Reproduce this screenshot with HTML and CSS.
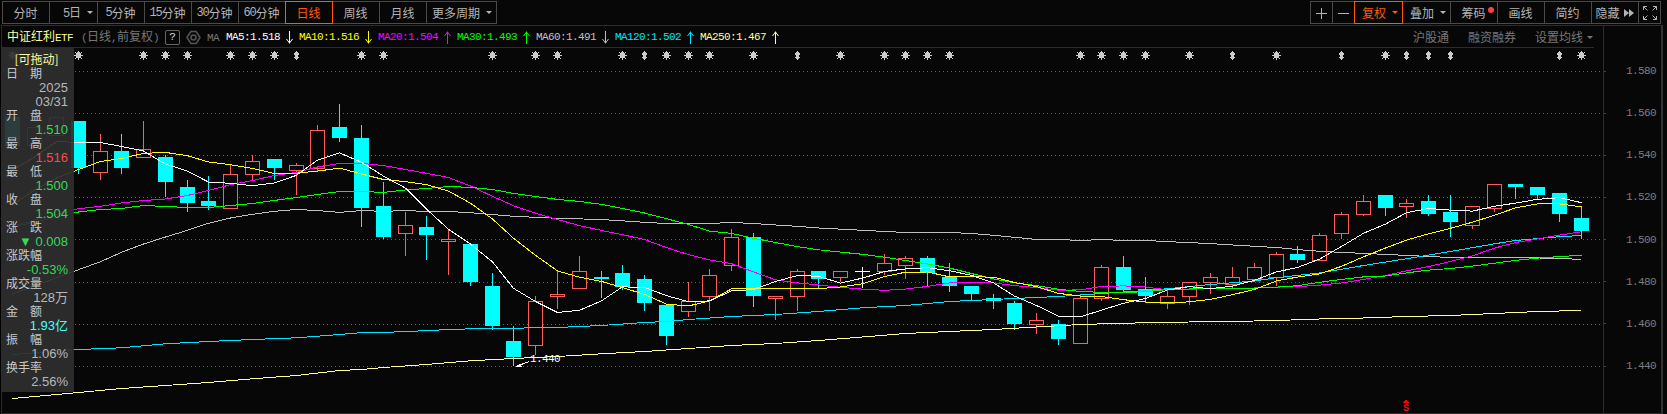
FILE: index.html
```html
<!DOCTYPE html>
<html lang="zh-CN">
<head>
  <meta charset="UTF-8" />
  <title>中证红利ETF 日线</title>
  <link rel="stylesheet" href="styles.css">
</head>
<body>
  <div class="toolbar">
    <div class="group">
      <div class="btn">分时</div>
      <div class="btn wide drop"><span><i>5</i>日</span><b class="caret"></b></div>
      <div class="btn"><i>5</i>分钟</div>
      <div class="btn"><i>15</i>分钟</div>
      <div class="btn"><i>30</i>分钟</div>
      <div class="btn"><i>60</i>分钟</div>
      <div class="btn active">日线</div>
      <div class="btn">周线</div>
      <div class="btn">月线</div>
      <div class="btn more drop"><span>更多周期</span><b class="caret"></b></div>
    </div>
    <div class="group">
      <div class="btn icon"><svg width="12" height="12"><path d="M0 6.5H11M5.5 1V12" /></svg></div>
      <div class="btn icon"><svg width="12" height="12"><path d="M0 6.5H11" /></svg></div>
      <div class="btn wide drop active"><span>复权</span><b class="caret"></b></div>
      <div class="btn wide drop"><span>叠加</span><b class="caret"></b></div>
      <div class="btn chips">筹码<span class="dot"></span></div>
      <div class="btn">画线</div>
      <div class="btn">简约</div>
      <div class="btn hide">隐藏<svg width="10" height="8"><path class="solid" d="M0 0L5 4L0 8ZM5 0L10 4L5 8Z" /></svg></div>
      <div class="btn icon"><svg width="14" height="14"><path d="M.5 4V.5H4M.5 .5L4.5 4.5M10 .5H13.5V4M13.5 .5L9.5 4.5M.5 10V13.5H4M.5 13.5L4.5 9.5M10 13.5H13.5V10M13.5 13.5L9.5 9.5" /></svg></div>
    </div>
  </div>

  <div class="main">
    <div class="left">
      <div class="info">
        <span class="name">中证红利<i>ETF</i></span>
        <span class="sub"><i>(</i>日线<i>,</i>前复权<i>)</i></span>
        <span class="help">?</span>
        <svg class="gear" width="15" height="15"><path d="M5 1.5H10L11.5 3.5L14 7.5L11.5 11.5L10 13.5H5L3.5 11.5L1 7.5L3.5 3.5Z" /><circle cx="7.5" cy="7.5" r="2.5" /></svg>
        <span class="ma-label"><i>MA</i></span>
        <div class="mas" id="mas"></div>
        <div class="links">
          <span>沪股通</span>
          <span>融资融券</span>
          <span>设置均线<b class="caret"></b></span>
        </div>
      </div>
      <div class="chart">
        <svg id="chart" width="1602" height="365" viewBox="2 48 1602 365"></svg>
        <div class="panel" id="panel"><div class="drag">[可拖动]</div></div>
      </div>
    </div>
    <div class="axis" id="axis"></div>
  </div>

<script src="chart.js"></script>
</body>
</html>
```
FILE: styles.css
```css
* {
  box-sizing: border-box;
}
body {
  margin: 0;
  width: 1667px;
  height: 414px;
  overflow: hidden;
  background: #070707;
  color: #b4b4b4;
  font: 12px/14px "Noto Sans CJK SC", sans-serif;
  border-left: 1px solid #000;
}
i {
  font-family: "Liberation Mono", monospace;
  font-style: normal;
  font-size: 11px;
  letter-spacing: -0.6px;
}
svg {
  display: block;
}

/* toolbar */
.toolbar {
  display: flex;
  justify-content: space-between;
  height: 25px;
  padding: 1px 6px 0 1px;
}
.group {
  display: flex;
}
.btn {
  display: flex;
  align-items: center;
  justify-content: center;
  width: 48px;
  height: 23px;
  margin-right: -1px;
  padding-right: 1px;
  border: 1px solid #4a4a4a;
  white-space: nowrap;
}
.group .btn:last-child {
  margin-right: 0;
}
.btn i {
  font-size: 12px;
  letter-spacing: -1.1px;
}
.wide {
  width: 49px;
}
.more {
  width: 71px;
}
.drop {
  justify-content: flex-end;
  gap: 6px;
  padding-right: 4px;
}
.caret {
  border: 3px solid transparent;
  border-top-color: currentColor;
  border-bottom: 0;
}
.active {
  position: relative;
  color: #ff5a0a;
  border-color: #ff5a0a;
}
.icon {
  width: 23px;
  padding-right: 0;
}
.btn path {
  fill: none;
  stroke: currentColor;
}
.btn .solid {
  fill: currentColor;
  stroke: none;
}
.chips {
  position: relative;
}
.dot {
  position: absolute;
  right: 3px;
  top: 5px;
  width: 6px;
  height: 6px;
  border-radius: 50%;
  background: #ff4040;
}
.hide {
  gap: 4px;
}

/* main area */
.main {
  display: flex;
  width: 1662px;
  height: 389px;
  border: 1px solid #2b2b2b;
  border-right: 2px solid #333;
}
.left {
  width: 1602px;
  border-right: 1px solid #2b2b2b;
}
.info {
  display: flex;
  align-items: center;
  height: 22px;
  width: 1592px;
  padding-left: 5px;
  padding-top: 1px;
  border-bottom: 1px solid #2b2b2b;
  color: #777;
  white-space: nowrap;
}
.name {
  width: 74px;
  color: #ffff9a;
}
.sub {
  width: 84px;
}
.help {
  width: 15px;
  height: 15px;
  border: 1px solid #666;
  border-radius: 2px;
  color: #ddd;
  text-align: center;
  font: 11px/13px "Liberation Mono", monospace;
}
.gear {
  margin: 0 6px 0 6px;
}
.gear path, .gear circle {
  fill: none;
  stroke: #555;
  stroke-width: 1.5;
}
.ma-label {
  width: 19px;
}
.mas, .ma {
  display: flex;
  align-items: center;
}
.ma svg {
  margin: 0 6px;
}
.ma path {
  fill: none;
  stroke: currentColor;
}
.links {
  display: flex;
  gap: 19px;
  margin-left: auto;
  padding-right: 1px;
}
.links span {
  display: flex;
  align-items: center;
}
.links .caret {
  margin-left: 4px;
}

.chart {
  position: relative;
  height: 365px;
}
.grid {
  stroke: #606060;
  stroke-dasharray: 1 3;
}
.up {
  fill: #070707;
  stroke: #ff5c5c;
}
.down {
  fill: #00ffff;
}
.up-wick {
  fill: #ff5c5c;
}
.flat {
  fill: #fff;
}
.line {
  fill: none;
}
.mark {
  fill: #ccc;
}
.low-text {
  fill: #fff;
  font: 11px "Liberation Mono", monospace;
  letter-spacing: -0.6px;
}
.low-arrow {
  fill: #fff;
  stroke: #fff;
}
.sell {
  fill: #f00;
  font: bold 10px "Liberation Mono", monospace;
}

/* floating data panel */
.panel {
  position: absolute;
  left: 0;
  top: 0;
  width: 72px;
  height: 344px;
  padding: 4px 6px 0 4px;
  background: rgba(46, 46, 46, 0.93);
  color: #c8c8c8;
}
.panel div {
  height: 14px;
  white-space: nowrap;
}
.panel .drag {
  color: #ffff9a;
  text-align: center;
  padding-right: 1px;
}
.panel .key {
  display: flex;
  justify-content: space-between;
  width: 36px;
}
.panel .val {
  text-align: right;
  font: 13px/16px "Liberation Sans", "Noto Sans CJK SC", sans-serif;
  color: #b8b8b8;
}
.panel .green {
  color: #35d95a;
}
.panel .red {
  color: #ee5050;
}
.panel .cyan {
  color: #4ff;
}

/* price axis */
.axis {
  flex: 1;
  padding-top: 24px;
  color: #7d7d7d;
}
.axis div {
  display: flex;
  align-items: center;
  justify-content: space-between;
  height: 42.15px;
  padding-right: 5px;
}
.axis div::before {
  content: "";
  width: 2px;
  height: 1px;
  background: #444;
}
```
FILE: chart.js
```js
const STEP = 21.78;
const cx = i => Math.floor(78.3 + i * STEP);

// [type, body top, body bottom, high, low]
const candles = [
  ['d',121,168,121,174],['u',151,173,134,180],['d',151,168,134,174],['u',149,158,121,158],['d',157,182,155,197],
  ['d',187,203,180,212],['d',201,206,176,210],['u',174,209,164,209],['u',161,175,155,180],['d',159,168,159,180],
  ['u',165,171,163,195],['u',130,169,125,171],['d',127,138,104,142],['d',138,208,125,227],['d',206,237,182,239],
  ['u',225,234,212,256],['d',227,235,216,260],['u',239,242,229,275],['d',244,282,244,286],['d',286,326,273,330],
  ['d',341,357,326,366],['u',301,346,296,355],['u',294,297,270,309],['u',271,289,256,289],['d',277,279,271,298],
  ['d',273,287,265,290],['d',279,303,275,311],['d',305,336,305,345],['u',301,312,282,317],['u',275,297,269,311],
  ['u',237,266,229,271],['d',237,296,233,307],['u',296,299,296,320],['u',271,297,269,311],['d',271,279,271,288],
  ['u',271,278,271,282],['f',271,272,267,288],['u',263,272,254,275],['u',258,266,256,279],['d',258,273,256,286],
  ['d',277,286,263,292],['d',286,294,286,300],['d',298,301,294,309],['d',303,324,301,330],['u',320,325,313,334],
  ['d',324,339,320,345],['u',298,344,295,344],['u',267,299,265,301],['d',267,290,256,291],['d',289,296,277,303],
  ['u',296,304,290,309],['u',282,297,282,305],['u',277,283,273,294],['u',277,285,267,288],['u',267,280,263,282],
  ['u',254,278,252,286],['d',254,260,246,263],['u',235,261,233,261],['u',214,234,212,239],['u',201,215,195,216],
  ['d',195,208,195,216],['u',203,207,199,218],['d',201,214,195,216],['d',212,222,195,237],['u',206,226,206,229],
  ['u',184,209,184,212],['d',184,187,184,199],['d',187,195,187,199],['d',193,214,193,222],['d',218,231,206,239]
];

const closes = candles.map(c => c[0] === 'd' ? c[2] : c[1]);

// simple moving average of the closes, continued from the points in head
function average(n, head) {
  const pts = head.slice();
  for (let i = n - 1; i < closes.length; i++) {
    let sum = 0;
    for (let k = 0; k < n; k++) sum += closes[i - k];
    pts.push([i, sum / n + 0.5]);
  }
  return pts;
}

const lines = [
  ['#c0c0c0', [[-3,294],[0,269.7],[1,261.7],[2,252.3],[3,244],[4,237],[5,230.3],[6,223.3],[7,218],[8,214.3],[9,211.3],[10,209.5],[11,210.5],[12,212.4],[13,210.5],[14,211.4],[15,210.5],[16,211.5],[17,211.5],[18,212.7],[20,216.3],[22,218.3],[24,219.5],[26,222.3],[27,223.5],[29,223.5],[30,222.5],[31,223.5],[32,225],[33,226.3],[34,228],[36,230.3],[38,232.5],[40,232.5],[41,233.5],[42,235.3],[43,237.3],[44,239.5],[45,239.5],[46,240.5],[47,239.5],[48,240.5],[49,240.5],[50,241.6],[52,243.6],[54,246.3],[55,247.5],[56,249.6],[57,251.3],[59,253.4],[61,255.4],[63,257.5],[66,257.5],[68,258.4],[69,259.5]]],
  ['#ffff96', [[-3,398.5],[0,392.5],[2,388.5],[4,385.5],[6,382.5],[8,378.8],[10,375.5],[12,370.5],[13,369.5],[14,367.5],[16,364.5],[18,360.8],[20,358.5],[22,356.5],[24,353.8],[26,351.5],[28,348.5],[30,345.5],[32,343.5],[34,340.5],[36,337],[38,333.5],[40,331.5],[41,330.5],[42,329.5],[44,327],[46,324.5],[48,323.2],[50,322.5],[52,321.5],[54,321],[55,320.5],[57,319],[59,318],[61,316.5],[63,315.5],[65,313.5],[67,311.5],[69,310.5]]],
  ['#00e5ff', [[-3,354.5],[0,349.5],[2,347.8],[4,343.8],[6,341.5],[8,339.5],[10,337.8],[12,334.5],[13,332.6],[15,331.8],[16,330.5],[18,328.8],[20,328.5],[21,327.5],[22,327.5],[24,325.5],[26,322.5],[27,321.5],[28,319.5],[30,316.5],[32,314.5],[34,311.5],[36,307.8],[38,305.5],[40,301.5],[41,300.5],[43,298.5],[45,296.5],[47,293.5],[49,290.5],[50,288.7],[52,284.5],[54,281],[55,277.7],[57,273],[59,265.5],[61,258.7],[63,251.5],[65,243.8],[66,240.5],[68,236.7],[69,235.5]]],
  ['#ff00ff', average(20, [[-3,226],[0,208.7],[1,206.3],[2,203],[3,200.5],[4,199],[5,195.5],[6,190.5],[7,184.7],[8,180.5],[9,175.5],[10,172.3],[11,167],[12,163.4],[13,163.4],[14,165.5],[15,169.5],[16,173.3],[17,177.5],[18,186]])],
  ['#00ff00', average(30, [[-3,227],[0,212],[1,209.5],[2,208.5],[3,205.5],[4,206.5],[5,207.5],[6,207.5],[7,205.5],[8,203.5],[9,200.4],[10,197.5],[11,194.5],[12,191.5],[13,191.5],[14,192.4],[15,190],[16,188.5],[17,186.5],[18,187.4],[19,189.5],[20,193.4],[21,196.5],[22,199.4],[23,201.4],[24,204.4],[25,208.4],[26,213],[27,218.7],[28,224.5]])],
  ['#ffff00', average(10, [[-3,205],[-2,190],[-1,178],[0,169.5],[1,161.5],[2,158.5],[3,153.4],[4,152.4],[5,155.7],[6,162],[7,164.7],[8,168.4]])],
  ['#ffffff', average(5, [[-3,170],[-2,157],[-1,141.5],[0,142.5],[1,142.5],[2,146.5],[3,151]])]
];

const stars = [-3,0,3,4,5,7,8,9,13,14,19,21,22,25,27,28,29,31,35,37,38,39,40,46,47,48,49,51,55,60,69];
const arrows = [10,26,33,53,58,61,62,63,68];

let svg = '<g shape-rendering="crispEdges">';
for (const y of [71, 113, 155, 197, 239, 282, 324, 366]) {
  svg += `<line class="grid" x1="3" x2="1602" y1="${y + .5}" y2="${y + .5}" />`;
}
// candles dimmed by the data panel
svg += '<path class="down" d="M5 117H20V146H5Z" /><path class="up" d="M27.500 127.500H41.500V145.500H27.500ZM49.500 117.500H63.500V135.500H49.500Z" />';
candles.forEach(([type, top, bottom, high, low], i) => {
  const x = cx(i);
  if (type === 'u') {
    svg += `<rect class="up-wick" x="${x}" y="${high}" width="1" height="${low - high}" />`;
    svg += `<rect class="up" x="${x - 6.5}" y="${top + .5}" width="14" height="${bottom - top - 1}" />`;
  } else {
    const cls = type === 'd' ? 'down' : 'flat';
    svg += `<rect class="${cls}" x="${x}" y="${high}" width="1" height="${low - high}" />`;
    svg += `<rect class="${cls}" x="${x - 7}" y="${top}" width="15" height="${bottom - top}" />`;
  }
});
for (const [color, pts] of lines) {
  svg += `<polyline class="line" stroke="${color}" points="${pts.map(p => (cx(p[0]) + .5) + ',' + p[1].toFixed(1)).join(' ')}" />`;
}
for (const i of stars) {
  const x = cx(i);
  svg += `<path class="mark" d="M${x - 2} 53h1v-1h1v-1h1v1h1v1h1v5h-5ZM${x} 51h1v9h-1ZM${x - 4} 55h9v1h-9ZM${x - 3} 52h1v1h-1ZM${x + 3} 52h1v1h-1ZM${x - 3} 58h1v1h-1ZM${x + 3} 58h1v1h-1Z" />`;
}
for (const i of arrows) {
  const x = cx(i);
  svg += `<path class="mark" d="M${x} 51h1v1h1v1h1v2h-1v2h1v1h-1v1h-1v1h-1v-1h-1v-1h-1v-1h1v-2h-1v-2h1v-1h1Z" />`;
}
svg += '<path class="low-arrow" d="M516 366.500L520 364.500L521 366.500ZM516 366.500L529 361.500" />';
svg += '<path fill="#f00" d="M1405 400h2v1h1v1h1v1h-6v-1h1v-1h1Z" />';
svg += '</g>';
svg += '<text class="low-text" x="530" y="362">1.440</text>';
svg += '<text class="sell" x="1403" y="411">S</text>';
document.getElementById('chart').innerHTML = svg;

// moving average legend
const mas = [
  ['MA5:1.518', '#ffffff', 0], ['MA10:1.516', '#ffff00', 0], ['MA20:1.504', '#ff00ff', 1], ['MA30:1.493', '#00ff00', 1],
  ['MA60:1.491', '#c0c0c0', 0], ['MA120:1.502', '#00e5ff', 1], ['MA250:1.467', '#ffff96', 1]
];
document.getElementById('mas').innerHTML = mas.map(([text, color, up]) => `
  <span class="ma" style="color:${color}"><i>${text}</i><svg width="7" height="13"><path d="${up ? 'M3.5 13V.5M.5 5L3.500 1L6.500 5' : 'M3.5 0V12.500M.5 8L3.500 12L6.500 8'}" /></svg></span>`).join('');

const rows = [
  ['日期', '2025', ''], ['', '03/31', ''], ['开盘', '1.510', 'green'], ['最高', '1.516', 'red'], ['最低', '1.500', 'green'],
  ['收盘', '1.504', 'green'], ['涨跌', '▼ 0.008', 'green'], ['涨跌幅', '-0.53%', 'green'], ['成交量', '128万', ''],
  ['金额', '1.93亿', 'cyan'], ['振幅', '1.06%', ''], ['换手率', '2.56%', '']
];
document.getElementById('panel').innerHTML += rows.map(([key, val, cls]) =>
  (key ? `<div class="key">${[...key].map(c => `<span>${c}</span>`).join('')}</div>` : '') +
  `<div class="val ${cls}">${val}</div>`).join('');

document.getElementById('axis').innerHTML = ['1.580', '1.560', '1.540', '1.520', '1.500', '1.480', '1.460', '1.440']
  .map(p => `<div><i>${p}</i></div>`).join('');
```
